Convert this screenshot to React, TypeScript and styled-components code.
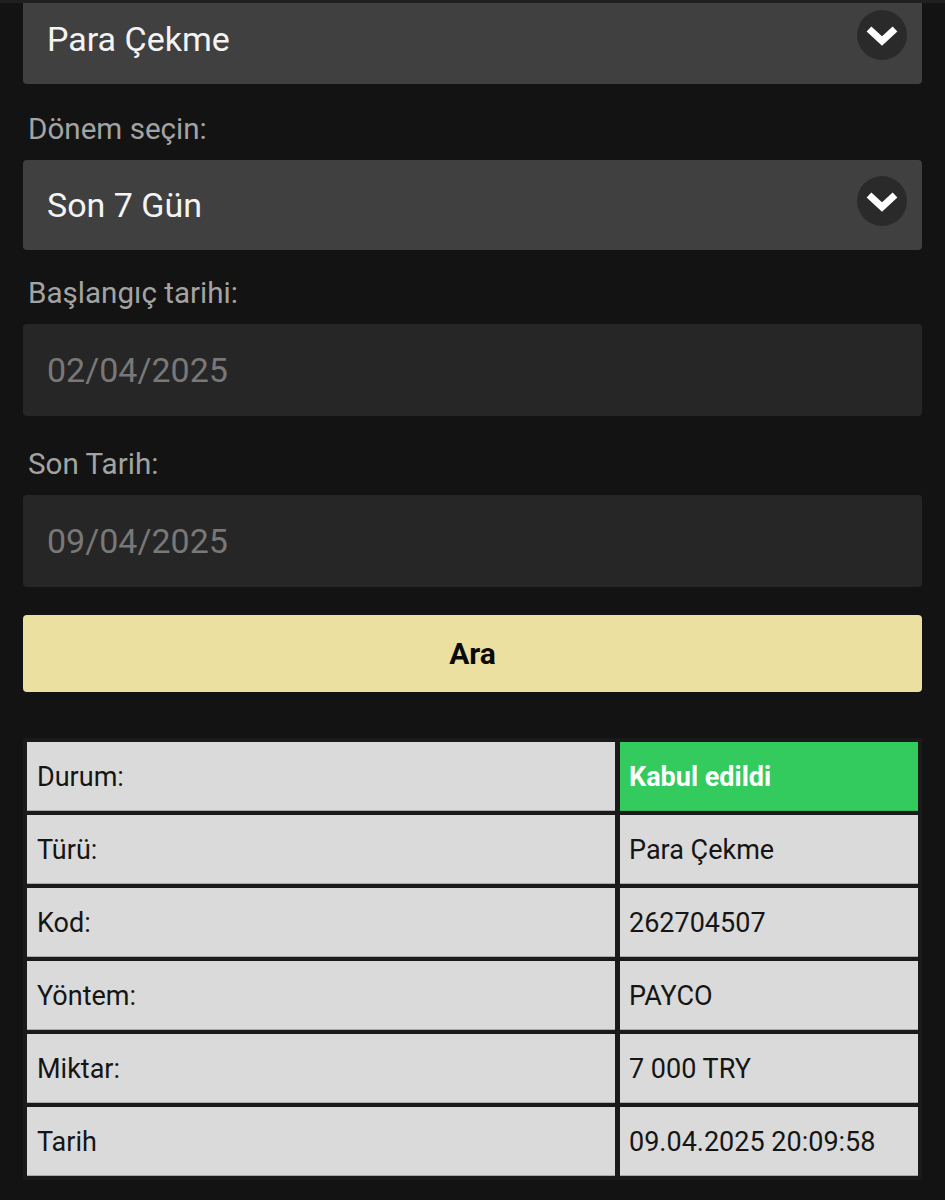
import { Fragment } from "react";
import styled, { createGlobalStyle } from "styled-components";

const GlobalStyle = createGlobalStyle`
    html, body {
        margin: 0;
        padding: 0;
        background: #131313;
    }

    body {
        font-family: Roboto, "Noto Sans", "Liberation Sans", sans-serif;
        -webkit-font-smoothing: antialiased;
    }
`;

const TopEdge = styled.div`
    position: fixed;
    top: 0;
    left: 0;
    right: 0;
    height: 3px;
    background: #1f1f1f;
    z-index: 2;
`;

const Page = styled.div`
    display: flex;
    flex-direction: column;
    padding: 0 23px 22px;
    overflow: hidden;
`;

const FieldLabel = styled.div<{ gapAbove?: number }>`
    margin: ${props => props.gapAbove ?? 28}px 0 14px 5px;
    height: 34px;
    line-height: 34px;
    font-size: 29.6px;
    color: #a3a3a3;
`;

const SelectBox = styled.div<{ first?: boolean }>`
    display: flex;
    align-items: center;
    justify-content: space-between;
    height: 90px;
    margin-top: ${props => (props.first ? "-6px" : "0")};
    padding: 0 15px 0 24px;
    box-sizing: border-box;
    background: #404040;
    border-radius: 4px;
`;

const SelectText = styled.span`
    font-size: 34px;
    color: #f4f4f4;
`;

const ChevronCircle = styled.div`
    display: flex;
    align-items: center;
    justify-content: center;
    width: 50px;
    height: 50px;
    margin-top: -8px;
    border-radius: 50%;
    background: #2a2a2a;
`;

const DateInput = styled.div`
    display: flex;
    align-items: center;
    height: 92px;
    padding-left: 24px;
    box-sizing: border-box;
    background: #262626;
    border-radius: 4px;
    font-size: 34px;
    color: #787878;
`;

const SearchButton = styled.button`
    margin-top: 28px;
    height: 77px;
    border: none;
    border-radius: 4px;
    background: #ebe09f;
    font-family: inherit;
    font-size: 30px;
    font-weight: 700;
    color: #0a0a0a;
`;

const DetailsTable = styled.div`
    display: grid;
    grid-template-columns: 588px 1fr;
    grid-auto-rows: 69px;
    gap: 4px 5px;
    margin-top: 46px;
    padding: 4px;
    background: #1a1a1a;
`;

const Cell = styled.div<{ status?: boolean; value?: boolean }>`
    display: flex;
    align-items: center;
    padding-left: ${props => (props.value ? "9px" : "10px")};
    box-sizing: border-box;
    background: ${props => (props.status ? "#34cb5e" : "#dadada")};
    box-shadow: inset 0 -1px 0 ${props => (props.status ? "#2fb755" : "#a9a9a9")};
    font-size: 27px;
    font-weight: ${props => (props.status ? 700 : 400)};
    color: ${props => (props.status ? "#ffffff" : "#151515")};
`;

const Chevron = () => (
    <svg width="34" height="24" viewBox="0 0 34 24">
        <path
            d="M4 6 L17 18 L30 6"
            fill="none"
            stroke="#ffffff"
            strokeWidth="7"
            strokeLinejoin="miter"
        />
    </svg>
);

const rows = [
    { label: "Durum:", value: "Kabul edildi", status: true },
    { label: "Türü:", value: "Para Çekme" },
    { label: "Kod:", value: "262704507" },
    { label: "Yöntem:", value: "PAYCO" },
    { label: "Miktar:", value: "7 000 TRY" },
    { label: "Tarih", value: "09.04.2025 20:09:58" }
];

const App = () => {
    return (
        <>
            <GlobalStyle />
            <TopEdge />
            <Page>
                <SelectBox first>
                    <SelectText>Para Çekme</SelectText>
                    <ChevronCircle>
                        <Chevron />
                    </ChevronCircle>
                </SelectBox>

                <FieldLabel gapAbove={28}>Dönem seçin:</FieldLabel>
                <SelectBox>
                    <SelectText>Son 7 Gün</SelectText>
                    <ChevronCircle>
                        <Chevron />
                    </ChevronCircle>
                </SelectBox>

                <FieldLabel gapAbove={26}>Başlangıç tarihi:</FieldLabel>
                <DateInput>02/04/2025</DateInput>

                <FieldLabel gapAbove={31}>Son Tarih:</FieldLabel>
                <DateInput>09/04/2025</DateInput>

                <SearchButton>Ara</SearchButton>

                <DetailsTable>
                    {rows.map(row => (
                        <Fragment key={row.label}>
                            <Cell>{row.label}</Cell>
                            <Cell value status={row.status}>
                                {row.value}
                            </Cell>
                        </Fragment>
                    ))}
                </DetailsTable>
            </Page>
        </>
    );
};

export default App;
